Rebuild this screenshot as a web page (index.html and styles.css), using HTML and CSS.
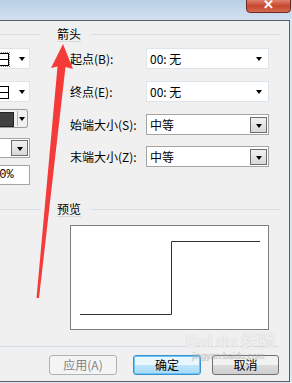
FILE: index.html
```html
<!DOCTYPE html>
<html lang="zh-CN">
<head>
    <meta charset="UTF-8">
    <title>设置形状格式 - 箭头</title>
    <link rel="stylesheet" href="styles.css">
</head>
<body>
    <div class="titlebar">
        <div class="close-btn">✕</div>
    </div>
    <div class="client">
        <div class="main">
            <div class="left-col">
                <div class="group-head"><span class="line"></span></div>
                <div class="lc lc-line dotted"><span class="mini"></span><span class="tri"></span></div>
                <div class="lc lc-line second"><span class="mini"></span><span class="tri"></span></div>
                <div class="lc lc-color"><span class="swatch"></span><span class="small-drop"><span class="tri"></span></span></div>
                <div class="lc lc-drop"><span class="drop-btn"><span class="tri"></span></span></div>
                <div class="lc lc-text">00%</div>
                <div class="group-head preview-head"><span class="line"></span></div>
            </div>
            <div class="right-col">
                <div class="group-head">
                    <span class="group-label">箭头</span>
                    <span class="line"></span>
                </div>
                <div class="row">
                    <span class="row-label">起点(B):</span>
                    <div class="combo flat"><span class="value">00: 无</span><span class="tri"></span></div>
                </div>
                <div class="row">
                    <span class="row-label">终点(E):</span>
                    <div class="combo flat"><span class="value">00: 无</span><span class="tri"></span></div>
                </div>
                <div class="row">
                    <span class="row-label">始端大小(S):</span>
                    <div class="combo"><span class="value">中等</span><span class="drop-btn"><span class="tri"></span></span></div>
                </div>
                <div class="row row-last">
                    <span class="row-label">末端大小(Z):</span>
                    <div class="combo"><span class="value">中等</span><span class="drop-btn"><span class="tri"></span></span></div>
                </div>
                <div class="group-head preview-head">
                    <span class="group-label">预览</span>
                    <span class="line"></span>
                </div>
                <div class="preview">
                    <svg width="197" height="103" viewBox="0 0 197 103">
                        <polyline points="9,88.5 100.5,88.5 100.5,15.5 189,15.5" fill="none" stroke="#333" stroke-width="1"/>
                    </svg>
                </div>
            </div>
        </div>
        <div class="footer">
            <div class="footer-line"></div>
            <div class="buttons">
                <button class="btn disabled">应用(A)</button>
                <button class="btn primary">确定</button>
                <button class="btn cancel">取消</button>
            </div>
        </div>
    </div>

    <svg class="red-arrow" width="292" height="383" viewBox="0 0 292 383">
        <polygon points="63,44 73,69 65.5,67 39,298 36.5,298 57.5,66.5 51,68" fill="#f53a3a"/>
    </svg>
    <div class="watermark">Bai<span class="du">du</span>经验<div class="wm-url">jingyan.baidu.com</div></div>
</body>
</html>
```

FILE: styles.css
```css
body {
    margin: 0;
    width: 292px;
    height: 383px;
    overflow: hidden;
    position: relative;
    background: #dce7f2;
    font-family: "Noto Sans CJK SC", "Liberation Sans", sans-serif;
    font-size: 12px;
    color: #000;
}
.titlebar {
    height: 20px;
    position: relative;
    background: linear-gradient(to bottom, #b9cfe6, #d3e1f0);
}
.close-btn {
    position: absolute;
    left: 246px;
    top: -4px;
    width: 43px;
    height: 15px;
    border: 1px solid #6f2b22;
    border-radius: 0 0 4px 4px;
    background: linear-gradient(to bottom, #e8a08e, #c7462f 60%, #d56a4f);
    color: #fff;
    font-size: 13px;
    line-height: 13px;
    text-align: center;
    font-weight: bold;
}
.client {
    width: 289px;
    height: 360px;
    border-top: 1px solid #5a5f66;
    border-right: 1px solid #5a5f66;
    border-bottom: 1px solid #5a5f66;
    background: #f0f0f0;
    display: flex;
    flex-direction: column;
}
.main {
    display: flex;
    height: 309px;
}
.left-col {
    width: 41px;
    display: flex;
    flex-direction: column;
}
.right-col {
    width: 239px;
    display: flex;
    flex-direction: column;
}
.group-head {
    height: 27px;
    display: flex;
    align-items: center;
}
.group-head .line {
    flex: 1;
    height: 1px;
    background: #d5dfe5;
}
.group-label {
    margin-left: 16px;
    margin-right: 10px;
    line-height: 14px;
    border-bottom: 1px solid #d8d8d8;
}
.preview-head {
    margin-top: 29px;
}
.left-col .preview-head {
    margin-top: 11px;
}

/* left side (cut off) controls */
.lc {
    position: relative;
    box-sizing: border-box;
    width: 30px;
    background: #fff;
    border: 1px solid #dde4ea;
    border-left: none;
}
.lc-line {
    height: 21px;
    margin-top: 0;
}
.lc-line.second {
    margin-top: 12px;
}
.lc-line .mini {
    position: absolute;
    left: 0;
    top: 4px;
    width: 8px;
    height: 11px;
    border: 1px solid #000;
    border-left: none;
    background: linear-gradient(#fff 5px, #000 5px, #000 6px, #fff 6px);
}
.lc-line.dotted .mini {
    outline: 1px dotted #e0532e;
    outline-offset: 0;
}
.tri {
    display: inline-block;
    width: 0;
    height: 0;
    border-left: 3px solid transparent;
    border-right: 3px solid transparent;
    border-top: 4px solid #000;
}
.lc-line .tri {
    position: absolute;
    left: 19px;
    top: 8px;
}
.lc-color {
    width: 28px;
    height: 19px;
    margin-top: 7px;
    border: 1px solid #9c9c9c;
    border-left: none;
    border-radius: 0 3px 3px 0;
    background: #f0f0f0;
}
.swatch {
    position: absolute;
    left: 0;
    top: 2px;
    width: 13px;
    height: 13px;
    background: #404040;
    border: 1px solid #222;
    border-left: none;
}
.small-drop {
    position: absolute;
    left: 17px;
    top: 1px;
    width: 8px;
    height: 15px;
    border-left: 1px solid #b5b5b5;
    display: flex;
    align-items: center;
    justify-content: center;
}
.lc-drop {
    height: 20px;
    margin-top: 10px;
    border-color: #a5a5a5;
}
.lc-drop .drop-btn {
    position: absolute;
    left: 11px;
    top: 1px;
}
.lc-text {
    height: 20px;
    margin-top: 7px;
    border-color: #a5a5a5;
    line-height: 18px;
    text-indent: -8px;
    overflow: hidden;
    font-family: "Liberation Mono", monospace;
    font-size: 12px;
}

/* right side rows */
.row {
    display: flex;
    align-items: center;
    height: 21px;
    padding-left: 29px;
    margin-bottom: 12px;
}
.row-last {
    margin-bottom: 0;
}
.row:nth-of-type(4) {
    margin-bottom: 11px;
}
.row-label {
    width: 76px;
    white-space: nowrap;
}
.combo {
    box-sizing: border-box;
    width: 123px;
    height: 21px;
    border: 1px solid #a5a5a5;
    background: #fff;
    display: flex;
    align-items: center;
    justify-content: space-between;
    padding-left: 3px;
    padding-right: 1px;
}
.combo.flat {
    border-color: #dde4ea;
    padding-right: 6px;
}
.drop-btn {
    box-sizing: border-box;
    width: 17px;
    height: 16px;
    border: 1px solid #6d6d6d;
    background: linear-gradient(#f2f2f2, #d8d8d8);
    display: flex;
    align-items: center;
    justify-content: center;
    padding-top: 2px;
}
.preview {
    margin-top: 2px;
    margin-left: 29px;
    width: 197px;
    height: 103px;
    border: 1px solid #7f7f7f;
    background: #fff;
}
.preview svg {
    display: block;
}

/* footer */
.footer {
    display: flex;
    flex-direction: column;
}
.footer-line {
    margin-top: 16px;
    width: 279px;
    height: 1px;
    background: #d3dde7;
}
.buttons {
    display: flex;
    margin-top: 8px;
    padding-left: 49px;
}
.btn {
    box-sizing: border-box;
    height: 20px;
    width: 68px;
    padding: 0;
    font-family: "Noto Sans CJK SC", "Liberation Sans", sans-serif;
    font-size: 12px;
    line-height: 16px;
    border-radius: 3px;
    border: 1px solid #707070;
    background: linear-gradient(#f2f2f2 50%, #dcdcdc 50%, #cfcfcf);
    color: #000;
}
.btn.disabled {
    border-color: #adb2b5;
    background: #f4f4f4;
    color: #838383;
}
.btn.primary {
    margin-left: 16px;
    border-color: #3c8fd0;
    box-shadow: inset 0 0 0 1px #6cc6f4;
    background: linear-gradient(#eaf6fd 50%, #bee6fd 50%, #a7d9f5);
}
.btn.cancel {
    margin-left: 11px;
    width: 67px;
}

/* overlays on top of the screenshot */
.red-arrow {
    position: absolute;
    left: 0;
    top: 0;
}
.watermark {
    position: absolute;
    left: 186px;
    top: 333px;
    color: rgba(255, 255, 255, 0.75);
    font-family: "Liberation Sans", "Noto Sans CJK SC", sans-serif;
    font-size: 17px;
    font-weight: bold;
    line-height: 18px;
    text-shadow: 0 0 1px rgba(150, 150, 150, 0.6);
}
.watermark .du {
    margin: 0 4px;
}
.wm-url {
    font-size: 9px;
    font-weight: normal;
    line-height: 10px;
    color: rgba(200, 200, 200, 0.5);
    margin-left: 6px;
}
```
